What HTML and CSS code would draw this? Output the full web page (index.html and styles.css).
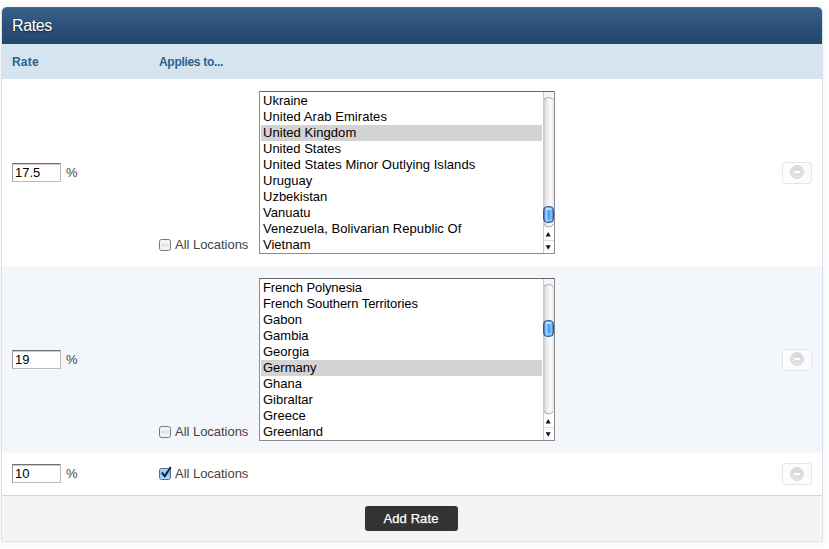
FILE: index.html
```html
<!DOCTYPE html>
<html lang="en">
<head>
<meta charset="utf-8">
<title>Rates</title>
<link rel="stylesheet" href="styles.css">
</head>
<body>
<svg class="defs" width="0" height="0" aria-hidden="true">
  <defs>
    <linearGradient id="track"><stop offset="0" stop-color="#c2c2c2"/><stop offset=".3" stop-color="#e8e8e8"/><stop offset=".7" stop-color="#fcfcfc"/><stop offset="1" stop-color="#e6e6e6"/></linearGradient>
    <linearGradient id="thumb"><stop offset="0" stop-color="#2a67b5"/><stop offset=".3" stop-color="#a9d6fb"/><stop offset=".5" stop-color="#4e9bea"/><stop offset=".8" stop-color="#7fc0fa"/><stop offset="1" stop-color="#2763b2"/></linearGradient>
    <linearGradient id="disc" x2="0" y2="1"><stop offset="0" stop-color="#d2d2d2"/><stop offset="1" stop-color="#e2e2e2"/></linearGradient>
    <linearGradient id="check" x2="0" y2="1"><stop offset="0" stop-color="#c3dcf3"/><stop offset=".5" stop-color="#86b9e8"/><stop offset="1" stop-color="#bfeafd"/></linearGradient>
    <g id="bar">
      <rect width="11" height="161" fill="#fff"/>
      <rect width="11" height="136" fill="url(#track)"/>
      <path d="M0 0H11V7Q9 4.500 5.500 4.500T0 7Z" fill="#f4f4f4"/>
      <path d="M1 8Q2 5.500 5.500 5.500T10 8" fill="none" stroke="#aaa"/>
      <path d="M0 131Q1.500 135.500 5.500 135.500T11 131V137H0Z" fill="#fff"/>
      <path d="M1 132Q2 135 5.500 135T10 132" fill="none" stroke="#aaa"/>
      <path d="M.5 0V161" stroke="#ccc"/>
      <path d="M0 148.500H11" stroke="#ddd"/>
      <path d="M2.700 144.500L5.200 140L7.700 144.500ZM2.700 153.200H7.700L5.200 157.700Z" fill="#111"/>
    </g>
    <g id="knob"><rect x=".5" y=".5" width="10" height="16" rx="4" fill="url(#thumb)" stroke="#2a568c"/><path d="M3 3H8" stroke="#d9efff" stroke-width="1.500"/><path d="M3 14H8" stroke="#a8dcff"/></g>
    <g id="minus"><circle cx="7" cy="7" r="6.300" fill="url(#disc)" stroke="#cdcdcd"/><circle cx="7" cy="7" r="5.300" fill="none" stroke="#ececec" stroke-width=".9"/><rect x="4" y="5.800" width="6" height="2.400" fill="#fff"/></g>
    <g id="box"><rect x=".5" y="2.500" width="11" height="11" rx="2" fill="#f4f4f4" stroke="#777"/><path d="M2 8H10" stroke="#e2e2e2" stroke-width="3"/></g>
    <g id="boxed"><rect x=".5" y="2.500" width="11" height="11" rx="2" fill="url(#check)" stroke="#4d6c92"/><path d="M3 6.500L5.700 10.300L11.800 1" fill="none" stroke="#101c30" stroke-width="1.900"/></g>
  </defs>
</svg>
<main class="panel">
  <h1 class="title">Rates</h1>
  <div class="row heads"><span class="rate">Rate</span><span class="narrow">Applies to...</span></div>

  <section class="row tall">
    <div class="rate"><span class="field">17.5</span><span class="pct">%</span></div>
    <div class="applies">
      <label class="all"><svg width="13" height="15"><use href="#box"/></svg><span>All Locations</span></label>
      <div class="list">
        <ul>
          <li>Ukraine</li><li class="wide">United Arab Emirates</li><li class="wide on">United Kingdom</li><li>United States</li><li class="wide">United States Minor Outlying Islands</li><li>Uruguay</li><li>Uzbekistan</li><li>Vanuatu</li><li class="wide">Venezuela, Bolivarian Republic Of</li><li>Vietnam</li>
        </ul>
        <svg width="11" height="161"><use href="#bar"/><use href="#knob" y="114"/></svg>
      </div>
    </div>
    <button class="remove" aria-label="Remove"><svg width="14" height="14"><use href="#minus"/></svg></button>
  </section>

  <section class="row tall alt">
    <div class="rate"><span class="field">19</span><span class="pct">%</span></div>
    <div class="applies">
      <label class="all"><svg width="13" height="15"><use href="#box"/></svg><span>All Locations</span></label>
      <div class="list">
        <ul>
          <li class="tight">French Polynesia</li><li class="tight">French Southern Territories</li><li>Gabon</li><li>Gambia</li><li>Georgia</li><li class="on">Germany</li><li>Ghana</li><li>Gibraltar</li><li>Greece</li><li class="tight">Greenland</li>
        </ul>
        <svg width="11" height="161"><use href="#bar"/><use href="#knob" y="41"/></svg>
      </div>
    </div>
    <button class="remove" aria-label="Remove"><svg width="14" height="14"><use href="#minus"/></svg></button>
  </section>

  <section class="row short">
    <div class="rate"><span class="field">10</span><span class="pct">%</span></div>
    <div class="applies">
      <label class="all"><svg width="13" height="15"><use href="#boxed"/></svg><span>All Locations</span></label>
    </div>
    <button class="remove" aria-label="Remove"><svg width="14" height="14"><use href="#minus"/></svg></button>
  </section>

  <footer class="foot"><button class="add">Add Rate</button></footer>
</main>
</body>
</html>
```
FILE: styles.css
```css
* { box-sizing: border-box; }
body {
  margin: 0;
  height: 549px;
  padding: 7px 0 0 1px;
  overflow: hidden;
  background: #fff;
  font: 13px/16px "Liberation Sans", Arial, sans-serif;
  color: #444;
}
.defs { position: absolute; }
svg { display: block; flex: none; }
.panel {
  width: 822px;
  height: 535px;
  border: 1px solid #d5e2ee;
  border-top: 0;
  border-radius: 5px 5px 2px 2px;
  background: #fff;
  box-shadow: 0 0 9px rgba(0, 0, 0, .07);
}
.title {
  margin: 0;
  height: 37px;
  padding-left: 10px;
  border-top: 1px solid #416d96;
  border-radius: 5px 5px 0 0;
  background: linear-gradient(#365f88, #24456b);
  color: #fff;
  font-size: 16px;
  font-weight: 400;
  line-height: 35px;
  letter-spacing: -.4px;
  text-shadow: 0 1px 2px rgba(0, 0, 0, .6);
}
.row { display: flex; align-items: center; padding: 0 10px; }
.rate { display: flex; align-items: center; width: 147px; flex: none; }
.heads {
  height: 35px;
  background: #d6e4f0;
  color: #29628f;
  font-size: 12px;
  font-weight: 700;
}
.heads .rate { letter-spacing: .2px; }
.narrow { letter-spacing: -.3px; }
.tall { height: 187px; }
.alt { background: #f3f7fb; }
.short { height: 42px; }
.field {
  width: 49px;
  height: 19px;
  padding: 0 2px;
  border: 1px solid #bbb;
  border-top-color: #707070;
  border-left-color: #999;
  background: #fff;
  box-shadow: inset 0 1px #ccc;
  color: #000;
  line-height: 17px;
}
.short .field { margin-bottom: 2px; }
.pct { margin-left: 5px; }
.applies { display: flex; align-items: flex-end; flex: 1; }
.all { display: flex; align-items: flex-start; width: 100px; height: 16px; flex: none; }
.tall .all { margin-bottom: 1px; }
.all svg { height: 16px; }
.all span { margin-left: 3px; white-space: nowrap; letter-spacing: -.03px; }
.list {
  display: flex;
  width: 296px;
  height: 163px;
  border: 1px solid #8c8c8c;
  border-top-color: #686868;
  background: #fff;
  color: #000;
}
.list ul { flex: 1; margin: 0; padding: 1px 1px 0; list-style: none; }
.list li { height: 16px; padding-left: 2px; white-space: nowrap; }
.list .on { background: #d3d3d3; }
.list .wide { letter-spacing: .055px; }
.list .tight { letter-spacing: -.09px; }
.remove {
  display: flex;
  align-items: center;
  justify-content: center;
  width: 30px;
  height: 22px;
  padding: 0;
  border: 1px solid #dfe8ef;
  border-radius: 3px;
  background: #fafcfd;
}
.tall .remove { padding-bottom: 1px; }
.foot {
  display: flex;
  justify-content: center;
  height: 46px;
  padding: 10px 2px 0 0;
  border-top: 1px solid #cfd3d6;
  background: #f4f4f4;
}
.add {
  width: 93px;
  height: 25px;
  padding: 0;
  border: 0;
  border-radius: 3px;
  background: #333;
  color: #fff;
  font: 13px/25px "Liberation Sans", Arial, sans-serif;
  letter-spacing: .1px;
  -webkit-text-stroke: .25px #fff;
}
```
